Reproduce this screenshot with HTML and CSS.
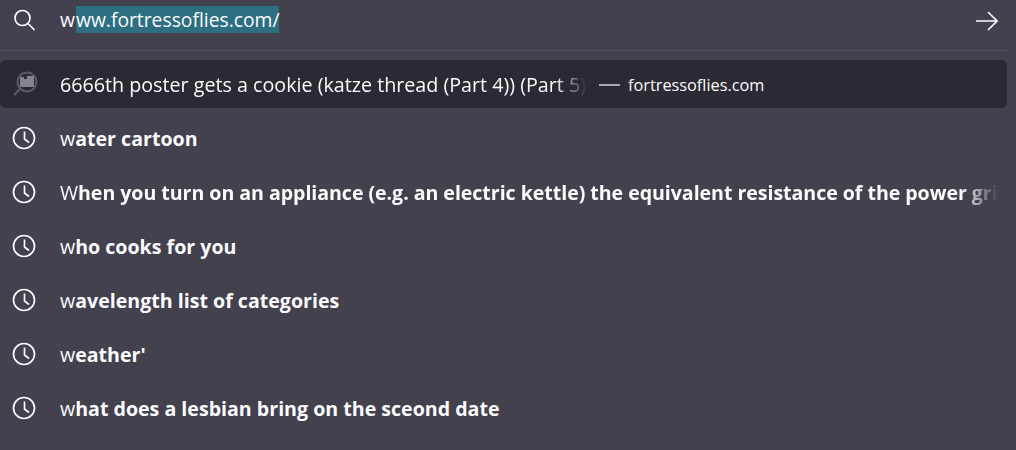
FILE: index.html
```html
<!DOCTYPE html>
<html lang="en">
<head>
  <meta charset="UTF-8" />
  <title>Address bar</title>
  <link rel="stylesheet" href="styles.css">
</head>
<body>
  <div class="urlbar">
    <!-- INPUT -->
    <div class="input-row">
      <svg class="icon" width="24" height="24" viewBox="0 0 24 24"><circle cx="10.5" cy="10" r="7.5"/><path d="M16 15.5l6.5 6.5"/></svg>
      <div class="input-text">w<span class="selected">ww.fortressoflies.com/</span></div>
      <svg class="go" width="24" height="24" viewBox="0 0 24 24"><path d="M2 12h20.5M14 3l9 9-9 9"/></svg>
    </div>

    <!-- RESULTS -->
    <div class="results">
      <div class="row row-active">
        <svg class="site-icon" width="28" height="28" viewBox="0 0 28 28">
          <circle cx="15" cy="12" r="9.5"/>
          <path d="M8.5 18.5l-6.5 6.5"/>
          <path class="site-fill" d="M8 7h4v2h3V6h7v11H8z"/>
        </svg>
        <div class="title-fade">6666th poster gets a cookie (katze thread (Part 4)) (Part 5)</div>
        <div class="dash"></div>
        <div class="domain">fortressoflies.com</div>
      </div>

      <div class="row">
        <svg class="icon" width="24" height="24" viewBox="0 0 24 24"><circle cx="12" cy="12" r="10.5"/><path d="M12.5 5.5v7.5l4.5 3.5"/></svg>
        <div class="text">w<b>ater cartoon</b></div>
      </div>
      <div class="row">
        <svg class="icon" width="24" height="24" viewBox="0 0 24 24"><circle cx="12" cy="12" r="10.5"/><path d="M12.5 5.5v7.5l4.5 3.5"/></svg>
        <div class="text fade">W<b>hen you turn on an appliance (e.g. an electric kettle) the equivalent resistance of the power gri</b></div>
      </div>
      <div class="row">
        <svg class="icon" width="24" height="24" viewBox="0 0 24 24"><circle cx="12" cy="12" r="10.5"/><path d="M12.5 5.5v7.5l4.5 3.5"/></svg>
        <div class="text">w<b>ho cooks for you</b></div>
      </div>
      <div class="row">
        <svg class="icon" width="24" height="24" viewBox="0 0 24 24"><circle cx="12" cy="12" r="10.5"/><path d="M12.5 5.5v7.5l4.5 3.5"/></svg>
        <div class="text">w<b>avelength list of categories</b></div>
      </div>
      <div class="row">
        <svg class="icon" width="24" height="24" viewBox="0 0 24 24"><circle cx="12" cy="12" r="10.5"/><path d="M12.5 5.5v7.5l4.5 3.5"/></svg>
        <div class="text">w<b>eather'</b></div>
      </div>
      <div class="row">
        <svg class="icon" width="24" height="24" viewBox="0 0 24 24"><circle cx="12" cy="12" r="10.5"/><path d="M12.5 5.5v7.5l4.5 3.5"/></svg>
        <div class="text">w<b>hat does a lesbian bring on the sceond date</b></div>
      </div>
    </div>
  </div>
</body>
</html>
```
FILE: styles.css
```css
* {
  margin: 0;
  padding: 0;
  box-sizing: border-box;
}

body {
  background: #42414d;
  color: #fbfbfe;
  font-family: "Open Sans", "Noto Sans", sans-serif;
  font-size: 19.6px;
  overflow: hidden;
}

.urlbar {
  width: 1007px;
}

svg {
  flex: none;
  fill: none;
  stroke: #fbfbfe;
  stroke-width: 1.7;
}

/* Input row */
.input-row {
  display: flex;
  align-items: center;
  height: 51px;
  padding: 0 0 10px 12px;
  border-bottom: 1px solid #55545f;
}

.input-text {
  flex: 1;
  margin-left: 24px;
  font-size: 19.3px;
  line-height: 26px;
}

.selected {
  margin-left: 1px;
  background: #2d6f80;
}

.go {
  margin: 2px 9px 0 0;
  stroke-width: 1.6;
}

/* Results */
.results {
  padding-top: 9px;
}

.row {
  display: flex;
  align-items: center;
  height: 54px;
  padding-left: 12px;
}

.row-active {
  height: 48px;
  margin-bottom: 3px;
  background: #2b2a33;
  border-radius: 5px;
}

.site-icon {
  stroke: #5d5c66;
  stroke-width: 2;
  margin-right: 20px;
}

.site-fill {
  fill: #85848c;
  stroke: none;
}

.title-fade {
  width: 527px;
  font-size: 19.7px;
  white-space: nowrap;
  overflow: hidden;
  -webkit-mask-image: linear-gradient(to right, #000 94%, transparent);
  mask-image: linear-gradient(to right, #000 94%, transparent);
}

.dash {
  width: 21px;
  height: 2px;
  margin: 2px 8px 0 12px;
  background: #a9a9b0;
}

.domain {
  padding-top: 1px;
  font-size: 16.3px;
}

.text {
  margin-left: 24px;
  white-space: nowrap;
}

.text b {
  font-weight: 700;
}

.fade {
  letter-spacing: -0.05px;
  -webkit-mask-image: linear-gradient(to right, #000 96%, transparent);
  mask-image: linear-gradient(to right, #000 96%, transparent);
}
```
